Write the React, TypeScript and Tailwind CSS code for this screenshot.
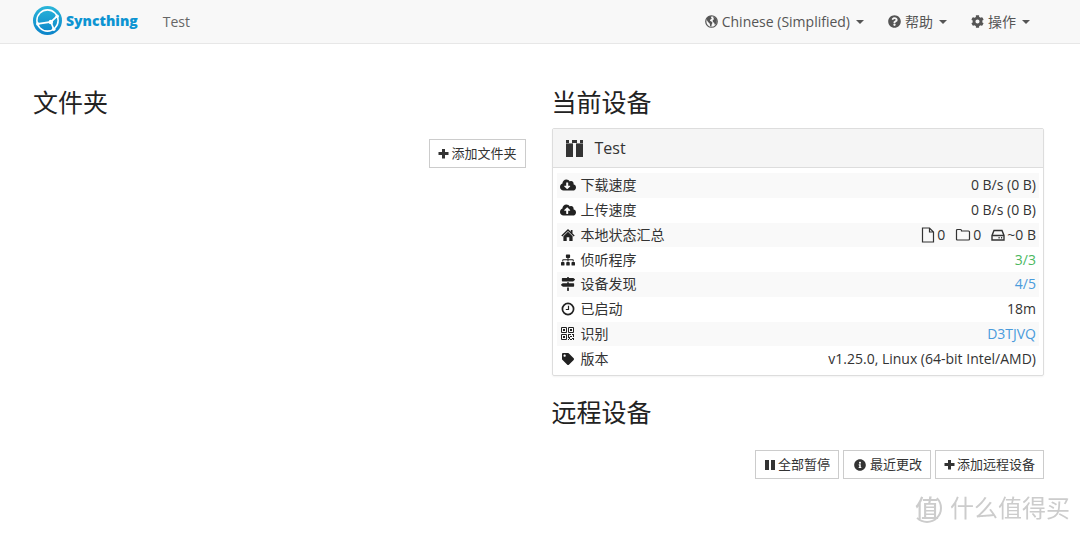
import type { ReactNode } from 'react'
import {
  FaCloudDownloadAlt,
  FaCloudUploadAlt,
  FaCog,
  FaInfoCircle,
  FaMapSigns,
  FaQuestionCircle,
  FaSitemap,
  FaTag,
} from 'react-icons/fa'

type Row = { icon: ReactNode; label: string; value: ReactNode }

const FileIcon = () => (
  <svg viewBox="0 0 14 16" className="h-4 w-3.5" fill="none" stroke="currentColor" strokeWidth="1.2">
    <path d="M1.5 1h7l4 4v10h-11zM8.5 1v4h4" />
  </svg>
)

const FolderIcon = () => (
  <svg viewBox="0 0 16 14" className="h-3.5 w-4" fill="none" stroke="currentColor" strokeWidth="1.2">
    <path d="M1.5 11.5v-9q0-1 1-1h3q1 0 1 1v.5h7q1 0 1 1v7q0 1-1 1h-11q-1 0-1-1z" />
  </svg>
)

const DiskIcon = () => (
  <svg viewBox="0 0 14 14" className="size-3.5" fill="none" stroke="currentColor" strokeWidth="1.4">
    <path d="M1 7.5l2-5h8l2 5V12H1zM1 7.5h12M7.5 9.8h1.2M10 9.8h1.2" />
  </svg>
)

const HomeIcon = () => (
  <svg viewBox="0 0 14 14" className="size-3.5" fill="currentColor">
    <path d="M7 1L.3 7.600l1 1L7 3l5.700 5.600 1-1L11.500 5.400V2H9.800v1.700z" />
    <path d="M7 3.800L2.400 8.300V13h3.300V9.300h2.600V13h3.300V8.300z" />
  </svg>
)

const ClockIcon = () => (
  <svg viewBox="0 0 14 14" className="size-3.5" fill="none" stroke="currentColor">
    <circle cx="7" cy="7" r="5.6" strokeWidth="1.7" />
    <path d="M7.5 3.8v3.7H4.8" strokeWidth="1.2" />
  </svg>
)

const QrIcon = () => (
  <svg viewBox="0 0 13 13" className="size-[13px]" fill="none" stroke="currentColor">
    <path d="M.5.5h5v5h-5zM7.5.5h5v5h-5zM.5 7.5h5v5h-5z" />
    <path
      fill="currentColor"
      stroke="none"
      d="M2 2h2v2H2zM9 2h2v2H9zM2 9h2v2H2zM7 7h3v1H7zM7 8h1v3H7zM9 9h2v1H9zM11 7h2v3h-1V8h-1zM8 10h1v2H8zM7 12h1v1H7zM9 12h2v1H9zM11 11h2v2h-1v-1h-1z"
    />
  </svg>
)

const GlobeIcon = () => (
  <svg viewBox="0 0 14 14" className="size-[13px]">
    <circle cx="7" cy="7" r="6.2" fill="none" stroke="currentColor" strokeWidth="1.3" />
    <path
      fill="currentColor"
      d="M2 3.500L4.500 1l2.700.3-.8 1.500 1 1-1.500 1-.7 1.300 1.700.8 1.200 1.500-.9 1.800-.4 2.500-1.300-.8-.3-2.400L3.800 8 2.300 6.200zM8.500 2.300l2.300.2 1.900 2.700-.2 3.300-1.800 2.400-.9-2.500-1.300-.9-.2-2 1.600-1z"
    />
  </svg>
)

const PlusIcon = () => (
  <svg viewBox="0 0 11 11" className="size-[11px]" fill="currentColor">
    <path d="M4 1h3v3h3.500v3H7v3.500H4V7H.5V4H4z" />
  </svg>
)

const PauseIcon = () => (
  <svg viewBox="0 0 12 12" className="size-3" fill="currentColor">
    <path d="M1 1h4v10H1zM7 1h4v10H7z" />
  </svg>
)

const Identicon = () => (
  <svg viewBox="0 0 17 17" className="size-[17px]" fill="currentColor">
    <path d="M0 0h3v3H0zM6 0h5v3H6zM14 0h3v3h-3zM0 4h7v13H0zM10 4h7v13h-7z" />
    <path opacity=".6" d="M0 3h7v1H0zM10 3h7v1h-7z" />
  </svg>
)

const Logo = () => (
  <svg viewBox="0 0 30 30" className="size-[29px]">
    <defs>
      <linearGradient id="logo" x1="0" y1="0" x2="0" y2="1">
        <stop offset="0" stopColor="#2bb6d9" />
        <stop offset="1" stopColor="#0b83c9" />
      </linearGradient>
    </defs>
    <circle cx="15" cy="15" r="15" fill="url(#logo)" />
    <circle cx="15" cy="15" r="11" fill="none" stroke="#fff" strokeWidth="1.6" />
    <path d="M5 18.500L18.500 16.500L25 10.500M18.500 16.500L21.500 24" fill="none" stroke="#fff" strokeWidth="1.8" />
    <circle cx="5" cy="18.5" r="1.8" fill="#fff" />
    <circle cx="18.5" cy="16.5" r="2.3" fill="#fff" />
    <circle cx="25" cy="10.5" r="1.8" fill="#fff" />
    <circle cx="21.5" cy="24" r="1.8" fill="#fff" />
  </svg>
)

const rows: Row[] = [
  { icon: <FaCloudDownloadAlt className="size-4 shrink-0" />, label: '下载速度', value: '0 B/s (0 B)' },
  { icon: <FaCloudUploadAlt className="size-4 shrink-0" />, label: '上传速度', value: '0 B/s (0 B)' },
  {
    icon: <HomeIcon />,
    label: '本地状态汇总',
    value: (
      <span className="flex items-center justify-end gap-2.5">
        <span className="flex items-center gap-0.5"><FileIcon />0</span>
        <span className="flex items-center gap-0.5"><FolderIcon />0</span>
        <span className="flex items-center gap-0.5"><DiskIcon />~0 B</span>
      </span>
    ),
  },
  { icon: <FaSitemap />, label: '侦听程序', value: <a href="#listeners" className="text-[#4cb85f]">3/3</a> },
  { icon: <FaMapSigns />, label: '设备发现', value: <a href="#discovery" className="text-[#4a9bdc]">4/5</a> },
  { icon: <ClockIcon />, label: '已启动', value: '18m' },
  { icon: <QrIcon />, label: '识别', value: <a href="#id" className="text-[#4a9bdc]">D3TJVQ</a> },
  { icon: <FaTag className="size-3" />, label: '版本', value: 'v1.25.0, Linux (64-bit Intel/AMD)' },
]

const NavMenu = ({ icon, label }: { icon: ReactNode; label: string }) => (
  <button type="button" className="flex items-center gap-1 text-[#555]">
    {icon}
    {label}
    <svg viewBox="0 0 8 4" className="ml-0.5 h-1 w-2" fill="currentColor">
      <path d="M0 0h8L4 4z" />
    </svg>
  </button>
)

const Button = ({ icon, children }: { icon: ReactNode; children: ReactNode }) => (
  <button
    type="button"
    className="flex h-[29px] items-center gap-0.5 border border-[#ccc] bg-white px-2 text-[13px] text-[#333]"
  >
    {icon}
    {children}
  </button>
)

const Heading = ({ children }: { children: ReactNode }) => (
  <h3 className="text-[25px] leading-7 text-[#222]">{children}</h3>
)

const App = () => {
  return (
    <div className="min-h-screen bg-white font-['Open_Sans','Noto_Sans_CJK_SC',sans-serif] text-sm text-[#333]">
      <nav className="flex h-11 items-center border-b border-[#e7e7e7] bg-[#f8f8f8] pr-[50px] pl-[33px]">
        <a href="#home" className="flex items-center gap-1 pb-0.5">
          <Logo />
          <span className="text-sm font-extrabold text-[#0d94d2]">Syncthing</span>
        </a>
        <span className="ml-[25px] text-[#666]">Test</span>
        <div className="ml-auto flex gap-6">
          <NavMenu icon={<GlobeIcon />} label="Chinese (Simplified)" />
          <NavMenu icon={<FaQuestionCircle className="size-[13px]" />} label="帮助" />
          <NavMenu icon={<FaCog className="size-[13px]" />} label="操作" />
        </div>
      </nav>

      <main className="grid grid-cols-2 gap-[26px] pt-11 pr-9 pl-[33px]">
        <section>
          <Heading>文件夹</Heading>
          <div className="mt-[23px] flex justify-end">
            <Button icon={<PlusIcon />}>添加文件夹</Button>
          </div>
        </section>

        <section>
          <Heading>当前设备</Heading>
          <div className="mt-3 rounded-xs border border-[#ddd] shadow-xs">
            <h4 className="flex h-[39px] items-center gap-3 border-b border-[#ddd] bg-[#f5f5f5] px-[13px] text-base">
              <Identicon />
              Test
            </h4>
            <div className="p-1 pt-[5px]">
              <table className="h-[198px] w-full">
                <tbody>
                  {rows.map((row) => (
                    <tr key={row.label} className="odd:bg-[#f9f9f9]">
                      <th scope="row" className="py-0 pl-1 text-left font-normal">
                        <span className="flex items-center gap-1.5 leading-5">
                          <span className="flex w-3.5 justify-center text-[#222]">{row.icon}</span>
                          {row.label}
                        </span>
                      </th>
                      <td className="py-0 pr-[3px] text-right leading-5">{row.value}</td>
                    </tr>
                  ))}
                </tbody>
              </table>
            </div>
          </div>

          <div className="mt-[22px]">
            <Heading>远程设备</Heading>
          </div>
          <div className="mt-6 flex justify-end gap-1">
            <Button icon={<PauseIcon />}>全部暂停</Button>
            <Button icon={<FaInfoCircle className="mx-0.5 size-3" />}>最近更改</Button>
            <Button icon={<PlusIcon />}>添加远程设备</Button>
          </div>
        </section>
      </main>

      <div className="fixed right-2.5 bottom-2.5 flex items-center gap-2 text-[#ccc]">
        <span className="flex size-[30px] items-center justify-center rounded-full border-2 border-[#ccc] border-t-transparent border-l-transparent text-2xl leading-none font-medium">
          值
        </span>
        <span className="text-2xl leading-8">什么值得买</span>
      </div>
    </div>
  )
}

export default App
